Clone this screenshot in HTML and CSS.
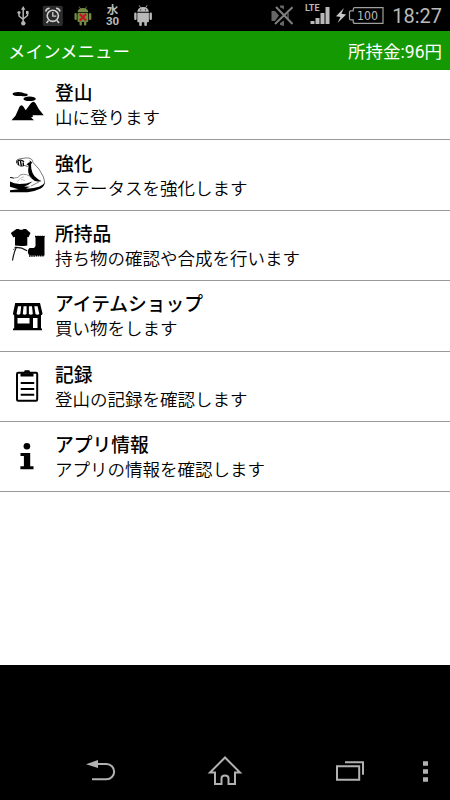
FILE: index.html
```html
<!DOCTYPE html>
<html lang="ja">
<head>
    <meta charset="UTF-8">
    <meta name="viewport" content="width=device-width, initial-scale=1.0">
    <title>メインメニュー</title>
    <link rel="stylesheet" href="styles.css">
</head>
<body>
    <div class="status-bar">
        <div class="status-left">
            <svg class="usb" width="12" height="20" viewBox="16.5 6 12 20" fill="none" stroke="#b5b5b5" stroke-width="1.5">
                <path d="M22.7 9v13M18.5 12v4l4.2 3.5M27 12v3.5l-4.3 3.5"/>
                <path d="M22.7 6l2.2 3.8h-4.4zM25.5 11h2.5v3h-2.5z" fill="#b5b5b5" stroke="none"/>
                <circle cx="18.5" cy="12.5" r="1.6" fill="#b5b5b5" stroke="none"/>
                <circle cx="22.8" cy="23.2" r="2.2" fill="#b5b5b5" stroke="none"/>
            </svg>
            <svg class="alarm" width="20" height="20" viewBox="43 6 20 20" fill="none">
                <rect x="43.3" y="6.3" width="19" height="19.3" rx="1" fill="#2b2b2b" stroke="#454545" stroke-width=".6"/>
                <circle cx="52.8" cy="15.8" r="5.6" stroke="#d0d0d0" stroke-width="1.6"/>
                <path d="M45.7 11.5q.5-3 4-3.2M60 11.5q-.5-3-4-3.2M48.5 20.5l-2 2.5M57 20.5l2 2.5" stroke="#d0d0d0" stroke-width="1.6"/>
                <path d="M52.8 12v4.2h3.5" stroke="#d0d0d0" stroke-width="1.3"/>
            </svg>
            <svg class="droid-error" width="18" height="20" viewBox="73.5 6 18 20">
                <g fill="#728a43">
                    <path d="M77 12.2q.6-4.2 5.4-4.2t5.4 4.2z"/>
                    <rect x="77" y="13" width="10.8" height="9" rx="1"/>
                    <rect x="74" y="13" width="2.3" height="7" rx="1.1"/>
                    <rect x="88.5" y="13" width="2.3" height="7" rx="1.1"/>
                    <rect x="79" y="21" width="2.4" height="4.6" rx="1"/>
                    <rect x="83.5" y="21" width="2.4" height="4.6" rx="1"/>
                </g>
                <path d="M78.5 6.5l1.7 2.5M86.3 6.5l-1.7 2.5" stroke="#728a43" stroke-width=".8"/>
                <path d="M79.3 14l6.2 6.5M85.5 14l-6.2 6.5" stroke="#c8141c" stroke-width="2"/>
            </svg>
            <div class="date"><span>水</span><span>30</span></div>
            <svg class="droid" width="18" height="22" viewBox="133.5 5 18 22">
                <g fill="#b9b9b9">
                    <path d="M136.8 11.8q.6-4.8 5.8-4.8t5.8 4.8z"/>
                    <path d="M136.8 12.7h11.6v8.8q0 .8-.8.8h-10q-.8 0-.8-.8z"/>
                    <rect x="133.7" y="12.6" width="2.4" height="7.4" rx="1.2"/>
                    <rect x="149" y="12.6" width="2.4" height="7.4" rx="1.2"/>
                    <rect x="138.7" y="21" width="2.6" height="5" rx="1.2"/>
                    <rect x="143.8" y="21" width="2.6" height="5" rx="1.2"/>
                </g>
                <path d="M138.6 5.3l1.5 2.5M146.6 5.3l-1.5 2.5" stroke="#b9b9b9" stroke-width=".8"/>
                <circle cx="140.2" cy="9.8" r=".6"/><circle cx="145" cy="9.8" r=".6"/>
            </svg>
        </div>
        <div class="status-right">
            <svg class="mute" width="24" height="22" viewBox="271 5 24 22" fill="none">
                <path d="M271.5 11h3.500l4 4.500-4 5.500h-3.500zM280 5.500h4v3.800l-4-2zM280 23l4-2.500V26l-4-1z" fill="#666"/>
                <path d="M288 13v6" stroke="#626262" stroke-width="1.500"/>
                <path d="M276 7l16.500 17M292.500 7.300L275 24" stroke="#808080" stroke-width="2"/>
            </svg>
            <div class="signal">
                <span class="lte">LTE</span>
                <svg width="25" height="21" viewBox="305.5 4 25 21" fill="#bababa">
                    <path d="M311 21h4v3h-4zM316 18h4v6h-4zM321 13h4v11h-4zM326 7h4v17h-4z"/>
                </svg>
            </div>
            <svg class="bolt" width="11" height="15" viewBox="337 8 11 15" fill="#c8c8c8">
                <path d="M345 8l-8 8.200 4.500.8-3 6 8.700-8.500-4.800-.8z"/>
            </svg>
            <div class="battery">
                <svg width="35" height="18" viewBox="350 7 35 18" fill="none" stroke="#a0a0a0" stroke-width="1.200">
                    <path d="M356 7.600h28v15.800h-28q-1.800 0-1.800-2v-1.500h-2.400q-1.300 0-1.300-1.500v-6q0-1.500 1.300-1.500h2.400V9.400q0-1.800 1.800-1.800z"/>
                </svg>
                <span class="battery-text">100</span>
            </div>
            <span class="clock">18:27</span>
        </div>
    </div>

    <header>
        <span>メインメニュー</span>
        <span>所持金:96円</span>
    </header>

    <ul class="menu">
        <li>
            <svg class="icon" viewBox="10 87 36 36">
                <path d="M11.500 120.200l4-4.500 4-9q2-3 4 0l2.200 3.500 5-6.700q2.800-3.300 5 0l3 5.500 5 6.300H32.500l.5 1.500-2 .800 3 2.600z"/>
                <ellipse cx="18.300" cy="94" rx="5.800" ry="2"/>
                <ellipse cx="24" cy="94.800" rx="3.700" ry="1.500"/>
                <ellipse cx="29.600" cy="98.800" rx="6.200" ry="2.300"/>
            </svg>
            <div class="text"><b>登山</b><span>山に登ります</span></div>
        </li>
        <li>
            <svg class="icon" viewBox="10 157 36 36" fill="none">
                <path d="M16.500 163q-.5-3.500 3-4.200l7-.9q6-.3 6.500 4.600 7 6.500 10 13.500 1.600 4 1.700 7.500" stroke="#555" stroke-width=".8"/>
                <path d="M16.500 163.500q-.5-3 1-4M17.500 164.500q4 3.500 7 1 3 2 6-.5" stroke="#333" stroke-width=".8"/>
                <path d="M17.800 161l.8 4M20.500 161l.8 5M23.200 162.500l.2 3.500M18 160.700q3-1.500 6 1" stroke="#000" stroke-width="1.400"/>
                <path d="M26.500 164.500q2-2.300 3.500-2.500l-.6-1.700 2.600 2-1 2.500q0 9.500 6.200 13.800 2.500 2.100 4.500 2.300-6 1.800-9.500-2-4.500-3.700-4-9.500l.6-3.800z" fill="#000"/>
                <path d="M11 177.500q7.500 1.500 9-2.500 7-2.500 12 3.500" stroke="#777" stroke-width=".8"/>
                <path d="M17 182q3-4.800 7-5.200M21 179.500l4 1" stroke="#999" stroke-width=".6"/>
                <path d="M10 177q3 .2 4.500 1.500L10 178zM10 181.500q4 2.200 9.500 2.500 7.500 0 13-2.500-3.500 3.500-8.500 5l6.500.2-4.500 1.600q5 1 13-1.500 5-2.500 5.700-4.500 0 4-4 6.200-6 3-13 3.700H10v-2l8.500-1-8.500-2.500z" fill="#000"/>
                <path d="M31 186l8-4" stroke="#555" stroke-width=".7"/>
            </svg>
            <div class="text"><b>強化</b><span>ステータスを強化します</span></div>
        </li>
        <li>
            <svg class="icon" viewBox="10 227 36 36">
                <path d="M16.500 229h2.200q2.500 1.700 5 0H26l4.500 4-2 4.300-1.200-.4v8.500q-6 1-12.300.1v-8.700l-1.500.6L10.800 233z"/>
                <path d="M35.500 236h9v19.500H30l-1.500-1.200q-1.700-3.700 1-6.300h4q2.500-1 2-4z"/>
                <path d="M35 236.500h9.500M29 256l14.800-.3" stroke="#000" stroke-width="1.500" stroke-dasharray="1.500 .7"/>
                <path d="M14.600 247.400q6.500-.6 12.400 3.300M16.200 247.500q-2.500 5.500-3.700 13" fill="none" stroke="#111" stroke-width="1.200"/>
                <path d="M14.400 248.500l-1 1.500" stroke="#000" stroke-width=".7"/>
            </svg>
            <div class="text"><b>所持品</b><span>持ち物の確認や合成を行います</span></div>
        </li>
        <li>
            <svg class="icon" viewBox="10 298 36 36">
                <path d="M15.200 303H40l2.500 10.500q0 1.500-1.500 1.700v13.300h1v1.800H13v-1.800h1.200v-13.300q-1.200-.2-1.200-1.700z"/>
                <path d="M18 306.300h3.200l-.9 7.700q-2.200 1.600-3.700 0zM23.600 306.300h3v7.700q-2 1.600-3.800 0zM28.900 306.300H32l.8 7.700q-2 1.600-3.900 0zM34.300 306.300h3.300l1.700 7.700q-1.800 1.600-3.800 0zM17.500 318h12v5.500h-12zM33 318h4.500v10H33z" fill="#fff"/>
            </svg>
            <div class="text"><b>アイテムショップ</b><span>買い物をします</span></div>
        </li>
        <li>
            <svg class="icon" viewBox="10 368 36 36" fill="none" stroke="#000">
                <rect x="17" y="372.800" width="20.200" height="28" rx="1.200" stroke-width="2"/>
                <path d="M20.500 373.500h13v3h-13z" fill="#000" stroke="none"/>
                <path d="M21.700 373.300h3.100v-2.500h4.500v2.500h3.200" fill="#000" stroke-width="1"/>
                <path d="M20.700 383h13.500M20.700 389h13.500M20.700 394.700h13.500" stroke-width="2"/>
            </svg>
            <div class="text"><b>記録</b><span>登山の記録を確認します</span></div>
        </li>
        <li>
            <svg class="icon" viewBox="10 439 36 36">
                <circle cx="26.900" cy="446.300" r="3.300"/>
                <path d="M20.500 453h9.700v13.300h3.300v3H20.400v-3h3.500V456h-3.400z"/>
            </svg>
            <div class="text"><b>アプリ情報</b><span>アプリの情報を確認します</span></div>
        </li>
    </ul>

    <nav>
        <svg class="back" width="30" height="20" viewBox="86 761 30 20" fill="none">
            <path d="M96 764h10.500a7.500 7.500 0 0 1 0 15.300H92" stroke="#b2b2b2" stroke-width="2"/>
            <path d="M86 764.300l12-4.300v8z" fill="#b2b2b2"/>
        </svg>
        <svg class="home" width="34" height="30" viewBox="208 756 34 30" fill="none" stroke="#b2b2b2" stroke-width="2">
            <path d="M225 757.500l-15 15h5v11.500h6.500v-5.500q0-3 3.500-3t3.500 3v5.500h6.500v-11.500h5z"/>
        </svg>
        <svg class="recent" width="28" height="21" viewBox="336 760 28 21" fill="none" stroke="#b2b2b2" stroke-width="2">
            <path d="M337 765.200h22.200v13.600H337zM345 761.300h18v12.500"/>
        </svg>
        <svg class="more" width="5" height="21" viewBox="423 761 5 21" fill="#b2b2b2">
            <path d="M423 761.300h5v4.500h-5zM423 769.200h5v4.500h-5zM423 777.200h5v4.500h-5z"/>
        </svg>
    </nav>
</body>
</html>
```
FILE: styles.css
```css
* {
    box-sizing: border-box;
}

body {
    display: flex;
    flex-direction: column;
    width: 450px;
    height: 800px;
    margin: 0;
    overflow: hidden;
    background-color: #fff;
    color: #000;
    font-family: Roboto, "Noto Sans CJK JP", sans-serif;
}

svg {
    display: block;
    flex: none;
    overflow: visible;
}

/* status bar */
.status-bar {
    display: flex;
    justify-content: space-between;
    height: 31px;
    padding: 0 8px 0 16.5px;
    background-color: #000;
    color: #bababa;
}

.status-left, .status-right {
    display: flex;
    align-items: center;
}

.alarm {
    margin-left: 14.5px;
}

.droid-error {
    margin-left: 10.5px;
}

.date {
    display: flex;
    flex-direction: column;
    align-items: center;
    width: 14px;
    margin-left: 14px;
    font-size: 11.5px;
    font-weight: bold;
    line-height: 11px;
}

.droid {
    margin-left: 14px;
}

.signal {
    position: relative;
    margin: 0 6px 2px 10px;
}

.lte {
    position: absolute;
    top: 0;
    left: 0;
    font-size: 9px;
    font-weight: bold;
    line-height: 8px;
}

.battery {
    position: relative;
    margin-left: 2px;
}

.battery-text {
    position: absolute;
    top: 0;
    left: 8px;
    font-family: "DejaVu Sans", sans-serif;
    font-size: 12px;
    line-height: 18px;
    transform: scaleX(.92);
    transform-origin: left;
}

.clock {
    width: 50px;
    margin-left: 8px;
    font-size: 20px;
    text-align: right;
    white-space: nowrap;
}

/* title bar */
header {
    display: flex;
    align-items: center;
    justify-content: space-between;
    height: 39px;
    padding: 0 8px;
    background-color: #159902;
    color: #fff;
    font-size: 17.5px;
}

/* menu list */
.menu {
    flex: 1;
    margin: 0;
    padding: 0;
    list-style: none;
}

.menu li {
    display: flex;
    align-items: center;
    height: 70.4px;
    padding: 0 10px;
    border-bottom: 1px solid #999;
}

.icon {
    width: 36px;
    height: 36px;
    margin-right: 9px;
}

.text {
    display: flex;
    flex-direction: column;
    padding-top: 4px;
    font-size: 17.5px;
    line-height: 25px;
}

.text b {
    font-size: 18.75px;
    font-weight: 500;
    line-height: 24px;
}

.text span {
    font-weight: 350;
}

/* navigation keys */
nav {
    display: flex;
    align-items: center;
    height: 135px;
    padding: 77px 22px 0 86px;
    background-color: #000;
}

.home {
    margin-left: 92px;
}

.recent {
    margin-left: 94px;
}

.more {
    margin-left: 59px;
}
```
